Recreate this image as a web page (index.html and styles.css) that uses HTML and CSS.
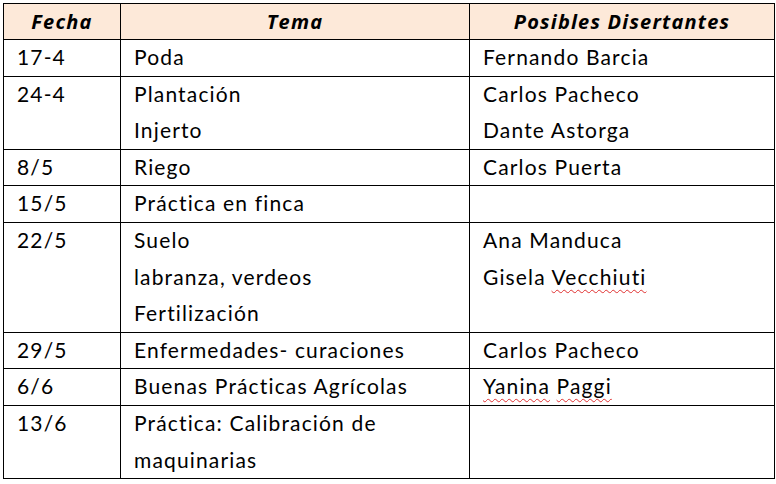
FILE: index.html
```html
<!DOCTYPE html>
<html lang="es">
<head>
<meta charset="utf-8">
<title>Cronograma</title>
<link rel="stylesheet" href="styles.css">
</head>
<body>
<table class="plan">
  <colgroup>
    <col class="c-fecha">
    <col class="c-tema">
    <col class="c-dis">
  </colgroup>
  <thead>
    <tr><th>Fecha</th><th>Tema</th><th>Posibles Disertantes</th></tr>
  </thead>
  <tbody>
    <tr><td><div class="cell">17-4</div></td><td><div class="cell">Poda</div></td><td><div class="cell">Fernando Barcia</div></td></tr>
    <tr><td><div class="cell">24-4</div></td><td><div class="cell">Plantación<br>Injerto</div></td><td><div class="cell">Carlos Pacheco<br>Dante Astorga</div></td></tr>
    <tr><td><div class="cell">8/5</div></td><td><div class="cell">Riego</div></td><td><div class="cell">Carlos Puerta</div></td></tr>
    <tr><td><div class="cell">15/5</div></td><td><div class="cell">Práctica en finca</div></td><td><div class="cell"></div></td></tr>
    <tr><td><div class="cell">22/5</div></td><td><div class="cell">Suelo<br>labranza, verdeos<br>Fertilización</div></td><td><div class="cell">Ana Manduca<br>Gisela <span class="sp">Vecchiuti</span></div></td></tr>
    <tr><td><div class="cell">29/5</div></td><td><div class="cell">Enfermedades- curaciones</div></td><td><div class="cell">Carlos Pacheco</div></td></tr>
    <tr><td><div class="cell">6/6</div></td><td><div class="cell">Buenas Prácticas Agrícolas</div></td><td><div class="cell"><span class="sp">Yanina</span> <span class="sp">Paggi</span></div></td></tr>
    <tr><td><div class="cell">13/6</div></td><td><div class="cell">Práctica: Calibración de<br>maquinarias</div></td><td><div class="cell"></div></td></tr>
  </tbody>
</table>
</body>
</html>
```

FILE: styles.css
```css
html, body {
  margin: 0;
  padding: 0;
  background: #ffffff;
}
body {
  padding: 3px 0 0 3px;
  font-family: Lato, "Open Sans", sans-serif;
  color: #000000;
}
.plan {
  border-collapse: collapse;
  width: 771px;
  table-layout: fixed;
  font-size: 21px;
}
.c-fecha { width: 117px; }
.c-tema { width: 349px; }
.c-dis { width: 305px; }
.plan th,
.plan td {
  border: 1px solid #000000;
  padding: 0 0 0 13px;
  vertical-align: top;
  text-align: left;
  white-space: nowrap;
}
.cell {
  line-height: 36.6px;
  margin-top: -1px;
  letter-spacing: 1.15px;
  min-height: 36.6px;
}
.plan th {
  background: #fde9d9;
  font-family: "Open Sans", Lato, sans-serif;
  font-weight: 700;
  font-style: italic;
  font-size: 20px;
  letter-spacing: 1.2px;
  text-align: center;
  padding: 0;
  line-height: 35px;
}
.sp {
  text-decoration: underline wavy #e03030;
  text-decoration-thickness: 1px;
  text-underline-offset: 4px;
}
```
